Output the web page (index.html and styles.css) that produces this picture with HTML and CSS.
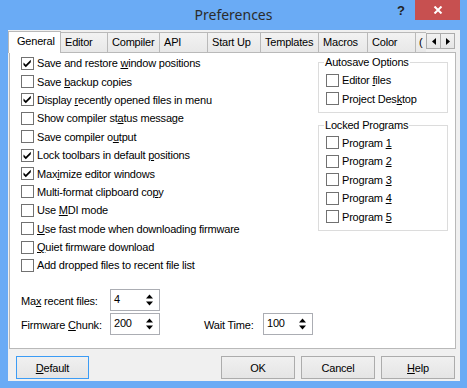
FILE: index.html
```html
<!DOCTYPE html>
<html lang="en">
<head>
    <meta charset="UTF-8">
    <title>Preferences</title>
    <link rel="stylesheet" href="styles.css">
</head>
<body>
    <div class="window">
        <div class="titlebar">
            <span class="title">Preferences</span>
            <span class="help-btn">?</span>
            <span class="close-btn">
                <svg width="10" height="8" viewBox="0 0 10 8"><path d="M1.5 0.5L8.5 7.5M8.5 0.5L1.5 7.5" stroke="#fff" stroke-width="2"/></svg>
            </span>
        </div>

        <div class="client">
            <div class="tabs">
                <div class="tab-strip">
                    <span class="tab active w-general">General</span>
                    <span class="tab w-editor">Editor</span>
                    <span class="tab w-compiler">Compiler</span>
                    <span class="tab w-api">API</span>
                    <span class="tab w-startup">Start Up</span>
                    <span class="tab w-templates">Templates</span>
                    <span class="tab w-macros">Macros</span>
                    <span class="tab w-color">Color</span>
                    <span class="tab partial">(</span>
                    <span class="tab-scroll">
                        <span class="scroll-btn"><svg width="4" height="7" viewBox="0 0 4 7"><path d="M4 0L0 3.5L4 7Z" fill="#000"/></svg></span>
                        <span class="scroll-btn"><svg width="4" height="7" viewBox="0 0 4 7"><path d="M0 0L4 3.5L0 7Z" fill="#000"/></svg></span>
                    </span>
                </div>

                <div class="tab-panel">
                    <div class="col-left">
                        <div class="checks">
                            <div class="check"><span class="box on"></span><span>Save and restore <u>w</u>indow positions</span></div>
                            <div class="check"><span class="box"></span><span>Save <u>b</u>ackup copies</span></div>
                            <div class="check"><span class="box on"></span><span>Display <u>r</u>ecently opened files in menu</span></div>
                            <div class="check"><span class="box"></span><span>Show compiler st<u>a</u>tus message</span></div>
                            <div class="check"><span class="box"></span><span>Save compiler o<u>u</u>tput</span></div>
                            <div class="check"><span class="box on"></span><span>Lock toolbars in default <u>p</u>ositions</span></div>
                            <div class="check"><span class="box on"></span><span>Max<u>i</u>mize editor windows</span></div>
                            <div class="check"><span class="box"></span><span>Multi-format clipboard co<u>p</u>y</span></div>
                            <div class="check"><span class="box"></span><span>Use <u>M</u>DI mode</span></div>
                            <div class="check"><span class="box"></span><span><u>U</u>se fast mode when downloading firmware</span></div>
                            <div class="check"><span class="box"></span><span><u>Q</u>uiet firmware download</span></div>
                            <div class="check"><span class="box"></span><span>Add dropped files to recent file list</span></div>
                        </div>

                        <div class="spins">
                            <span class="spin-label"><span>Ma<u>x</u> recent files:</span></span>
                            <span class="spin"><span class="spin-value">4</span><span class="spin-arrows"></span></span>
                            <span class="spin-label row2"><span>Firmware <u>C</u>hunk:</span></span>
                            <span class="spin row2"><span class="spin-value">200</span><span class="spin-arrows"></span></span>
                            <span class="spin-label row2 col4"><span>Wait Time:</span></span>
                            <span class="spin row2 col5"><span class="spin-value">100</span><span class="spin-arrows"></span></span>
                        </div>
                    </div>

                    <div class="col-right">
                        <fieldset class="group">
                            <legend>Autosave Options</legend>
                            <div class="group-list">
                                <div class="check"><span class="box"></span><span>Editor <u>f</u>iles</span></div>
                                <div class="check"><span class="box"></span><span>Project Des<u>k</u>top</span></div>
                            </div>
                        </fieldset>
                        <fieldset class="group locked">
                            <legend>Locked Programs</legend>
                            <div class="group-list">
                                <div class="check"><span class="box"></span><span>Program <u>1</u></span></div>
                                <div class="check"><span class="box"></span><span>Program <u>2</u></span></div>
                                <div class="check"><span class="box"></span><span>Program <u>3</u></span></div>
                                <div class="check"><span class="box"></span><span>Program <u>4</u></span></div>
                                <div class="check"><span class="box"></span><span>Program <u>5</u></span></div>
                            </div>
                        </fieldset>
                    </div>
                </div>
            </div>

            <div class="buttons">
                <button class="btn focused"><u>D</u>efault</button>
                <span class="spacer"></span>
                <button class="btn">OK</button>
                <button class="btn">Cancel</button>
                <button class="btn"><u>H</u>elp</button>
            </div>
        </div>
    </div>

    <script>
        // checkmarks and spinner arrows are the same everywhere, fill them in here
        document.querySelectorAll(".box.on").forEach(function (box) {
            box.innerHTML = '<svg width="11" height="11" viewBox="0 0 11 11"><path d="M1.5 4.5L3.8 6.8L8.8 1.8L8.8 4.3L3.8 9.3L1.5 7Z" fill="#000"/></svg>';
        });
        document.querySelectorAll(".spin-arrows").forEach(function (el) {
            el.innerHTML = '<svg width="7" height="12" viewBox="0 0 7 12"><path d="M0 4.5L3.5 0.5L7 4.5Z M0 7.5L3.5 11.5L7 7.5Z" fill="#000"/></svg>';
        });
    </script>
</body>
</html>
```

FILE: styles.css
```css
body {
    margin: 0;
    background-color: #6aabf5;
    font-family: "Liberation Sans", Arial, sans-serif;
    font-size: 11px;
    letter-spacing: -0.2px;
    color: #000;
}
.window {
    width: 467px;
    height: 388px;
}
.titlebar {
    position: relative;
    height: 30px;
    text-align: center;
    letter-spacing: 0;
}
.title {
    font-family: "Noto Sans", sans-serif;
    font-size: 14px;
    line-height: 29px;
    color: #2b2b2b;
}
.help-btn {
    position: absolute;
    left: 397px;
    top: 3px;
    font-size: 13px;
    font-weight: bold;
    line-height: 16px;
    color: #222;
}
.close-btn {
    position: absolute;
    left: 415px;
    top: 0;
    width: 45px;
    height: 20px;
    background-color: #c75050;
    display: flex;
    justify-content: center;
    align-items: center;
}
.client {
    margin: 0 7px 0 8px;
    height: 351px;
    padding-top: 1px;
    box-sizing: border-box;
    background-color: #f0f0f0;
}

/* tabs */
.tab-strip {
    display: flex;
    align-items: flex-end;
    height: 21px;
    position: relative;
    z-index: 1;
}
.tab {
    height: 20px;
    box-sizing: border-box;
    border: 1px solid #b9b9b9;
    border-bottom: none;
    margin-left: -1px;
    padding-left: 4px;
    line-height: 19px;
    background: linear-gradient(#f2f2f2, #e8e8e8);
    white-space: nowrap;
    overflow: hidden;
}
.tab.active {
    height: 22px;
    margin-left: 0;
    margin-bottom: -1px;
    padding-left: 8px;
    line-height: 18px;
    background: #fff;
    position: relative;
    z-index: 2;
}
.w-general { width: 53px; }
.w-editor { width: 48px; }
.w-compiler { width: 53px; }
.w-api { width: 49px; }
.w-startup { width: 54px; }
.w-templates { width: 59px; }
.w-macros { width: 50px; }
.w-color { width: 49px; }
.tab.partial {
    width: 11px;
    border-right: none;
    padding-left: 3px;
}
.tab-scroll {
    display: flex;
    align-self: flex-start;
    margin-top: 2px;
}
.scroll-btn {
    width: 15px;
    height: 16px;
    box-sizing: border-box;
    border: 1px solid #acacac;
    margin-left: -1px;
    background: linear-gradient(#f2f2f2, #e5e5e5);
    display: flex;
    justify-content: center;
    align-items: center;
}
.scroll-btn:first-child {
    margin-left: 0;
}
.tab-panel {
    display: flex;
    margin-left: 1px;
    width: 447px;
    height: 297px;
    box-sizing: border-box;
    border: 1px solid #b9b9b9;
    background: #fff;
}

/* checkboxes */
.col-left {
    flex: 1;
    padding-left: 11px;
}
.checks {
    padding-top: 1px;
}
.check {
    display: flex;
    align-items: center;
    gap: 3px;
    height: 18.4px;
    white-space: nowrap;
}
.box {
    width: 13px;
    height: 13px;
    box-sizing: border-box;
    border: 1px solid #717171;
    background: #fff;
    display: flex;
}
.box svg {
    display: block;
}

/* spinners */
.spins {
    display: grid;
    grid-template-columns: 89px 50px 44px 59px 50px;
    grid-auto-rows: 22px;
    row-gap: 2px;
    margin-top: 14px;
}
.spin-label {
    display: flex;
    align-items: center;
    padding-top: 2px;
    white-space: nowrap;
}
.row2 {
    grid-row: 2;
}
.col4 {
    grid-column: 4;
}
.col5 {
    grid-column: 5;
}
.spin {
    display: flex;
    align-items: center;
    justify-content: space-between;
    box-sizing: border-box;
    border: 1px solid #abadb3;
    background: #fff;
    padding: 0 6px 0 3px;
}
.spin-value {
    padding-bottom: 1px;
}
.spin-arrows svg {
    display: block;
}

/* group boxes */
.col-right {
    width: 130px;
    margin-right: 7px;
    padding-top: 3px;
}
.group {
    margin: 0;
    padding: 0 6px 4px 7px;
    border: 1px solid #dcdcdc;
}
.group legend {
    padding: 0 1px;
    margin-left: -2px;
    line-height: 13px;
}
.group-list {
    margin-top: 2px;
}
.group.locked {
    margin-top: 6px;
}

/* buttons */
.buttons {
    display: flex;
    gap: 6px;
    margin-top: 7px;
    padding: 0 5px 0 8px;
}
.spacer {
    flex: 1;
}
.btn {
    width: 74px;
    height: 23px;
    border: 1px solid #acacac;
    background: linear-gradient(#f0f0f0, #e5e5e5);
    font-family: "Liberation Sans", Arial, sans-serif;
    font-size: 11px;
    letter-spacing: -0.2px;
    color: #000;
    padding: 0;
}
.btn.focused {
    width: 73px;
    border-color: #3c9cf5;
}
```
